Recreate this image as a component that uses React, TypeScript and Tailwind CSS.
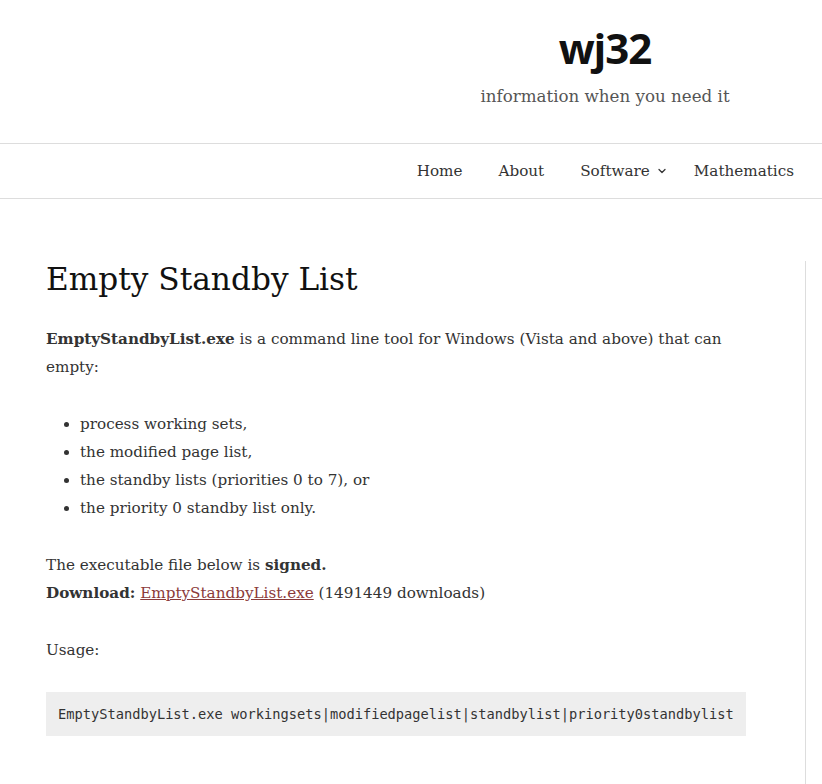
import { ChevronDown } from 'lucide-react'

const serif = { fontFamily: '"DejaVu Serif", serif' }

function App() {
  return (
    <div className="min-h-screen bg-white text-[#333]" style={serif}>
      <header className="h-[143px] flex">
        <div className="ml-[388px] flex-1 flex flex-col items-center pt-[22px]">
          <h1 className="text-[42px] font-bold leading-[52px] text-[#111] tracking-tight" style={{ fontFamily: '"Open Sans", sans-serif' }}>
            wj32
          </h1>
          <p className="text-[16.7px] leading-[28px] text-[#555] mt-[8px]">information when you need it</p>
        </div>
      </header>

      <nav className="h-[56px] border-y border-[#ddd] flex items-center justify-end pr-[28px] text-[15.2px] text-[#333]">
        <ul className="flex items-center gap-[36px]">
          <li>Home</li>
          <li>About</li>
          <li className="flex items-center mr-[-10px]">
            Software
            <ChevronDown className="w-[12px] h-[12px] ml-[6px]" strokeWidth={2.5} />
          </li>
          <li>Mathematics</li>
        </ul>
      </nav>

      <div className="flex pt-[62px]">
        <main className="ml-[46px] w-[700px] text-[15.2px] leading-[28px]">
          <h2 className="text-[31.2px] leading-[40px] text-[#111] mt-[-2px] mb-[26px]">Empty Standby List</h2>
          <p>
            <strong>EmptyStandbyList.exe</strong> is a command line tool for Windows (Vista and above) that can
            empty:
          </p>
          <ul className="list-disc pl-[34px] mt-[29px] mb-[29px]">
            <li>process working sets,</li>
            <li>the modified page list,</li>
            <li>the standby lists (priorities 0 to 7), or</li>
            <li>the priority 0 standby list only.</li>
          </ul>
          <p>
            The executable file below is <strong>signed.</strong>
            <br />
            <strong>Download:</strong>{' '}
            <a className="text-[#8b3a3a] underline">EmptyStandbyList.exe</a> (1491449 downloads)
          </p>
          <p className="mt-[29px]">Usage:</p>
          <pre
            className="mt-[28px] bg-[#eee] h-[44px] px-[12px] flex items-center text-[13.7px] text-[#333]"
            style={{ fontFamily: '"DejaVu Sans Mono", monospace' }}
          >
            EmptyStandbyList.exe workingsets|modifiedpagelist|standbylist|priority0standbylist
          </pre>
        </main>
        <div className="ml-[59px] w-px bg-[#ddd] min-h-[530px]" />
      </div>
    </div>
  )
}

export default App
